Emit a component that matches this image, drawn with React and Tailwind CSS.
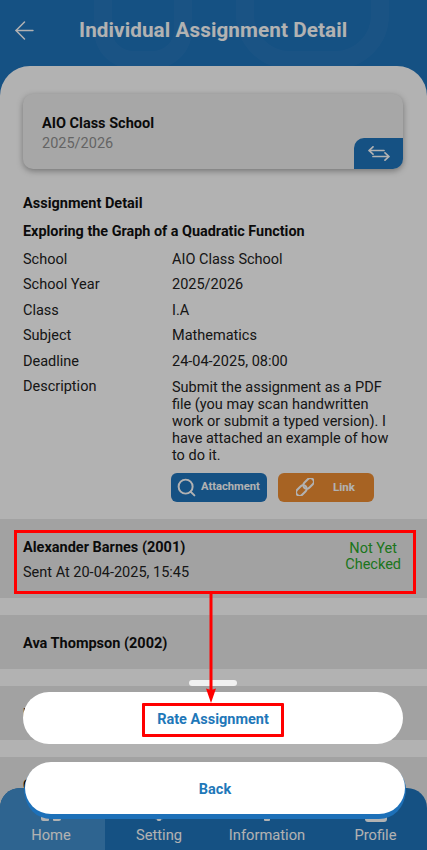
import React from "react";
import { ArrowLeft, Search } from "lucide-react";

const DETAILS = [
  ["School", "AIO Class School"],
  ["School Year", "2025/2026"],
  ["Class", "I.A"],
  ["Subject", "Mathematics"],
  ["Deadline", "24-04-2025, 08:00"],
];

const NAV = [
  { label: "Home", icon: "home", cell: "bg-[#4290ce] pr-[3px]" },
  { label: "Setting", icon: "gear", cell: "" },
  { label: "Information", icon: "bell", cell: "" },
  { label: "Profile", icon: "user", cell: "pl-[3px]" },
];

function NavIcon({ name }) {
  // only the lower edge of these shows below the Back button
  return (
    <svg width="24" height="24" viewBox="0 0 24 24" fill="#fff">
      {name === "home" && (
        <path d="M12 2 2 11v10a2 2 0 0 0 2 2h5a1 1 0 0 0 1-1v-5h4v5a1 1 0 0 0 1 1h5a2 2 0 0 0 2-2V11z" />
      )}
      {name === "gear" && (
        <path d="M3 14h18l-1 3-3 1-1 3-2 .5-.5 1.500h-3L10 21.500 8 21l-1-3-3-1z" />
      )}
      {name === "bell" && (
        <>
          <path d="M1 14h22c0 3-2 4-5 4H6c-3 0-5-1-5-4z" />
          <rect x="9" y="20" width="6" height="3" rx="1" />
        </>
      )}
      {name === "user" && (
        <path d="M1 12h22v9a3 3 0 0 1-3 3H4a3 3 0 0 1-3-3z" />
      )}
    </svg>
  );
}

function SwitchIcon() {
  return (
    <svg width="22" height="15" viewBox="0 0 22 15" fill="none" stroke="#fff" strokeWidth="1.700" strokeLinecap="round" strokeLinejoin="round">
      <path d="M16 4.500H1M5 .8 1 4.500l4 3.700" />
      <path d="M5 10.500h16M17 6.800l4 3.700-4 3.700" />
    </svg>
  );
}

function ChainIcon() {
  return (
    <svg width="18" height="18" viewBox="0 0 18 18" fill="none" stroke="#fff" strokeWidth="2">
      <g transform="rotate(-45 9 9)">
        <rect x="-2" y="5.500" width="12" height="7" rx="3.500" />
        <rect x="8" y="5.500" width="12" height="7" rx="3.500" />
      </g>
    </svg>
  );
}

function StudentRow({ name, sent, className }) {
  return (
    <div className={`flex items-center justify-between bg-[#e9e9e9] pl-[23px] pr-[26px] ${className}`}>
      <div>
        <div className="text-[14.5px] font-bold leading-[18px] text-[#111]">{name}</div>
        {sent && <div className="mt-[7px] text-[14.5px] leading-[18px] text-[#222]">{sent}</div>}
      </div>
      {sent && (
        <div className="mb-[8px] text-center text-[14.5px] leading-[16px] text-[#2aa82a]">
          Not Yet
          <br />
          Checked
        </div>
      )}
    </div>
  );
}

export default function App() {
  return (
    <div className="relative h-[850px] w-[427px] overflow-hidden bg-[#1f74bc] font-['Roboto',sans-serif]">
      {/* faint pattern behind the header */}
      <svg className="absolute left-0 top-0" width="427" height="66" fill="none" stroke="#fff" strokeOpacity="0.035" strokeWidth="18">
        <rect x="103" y="-40" width="80" height="100" rx="30" />
        <rect x="245" y="-50" width="135" height="110" rx="45" />
      </svg>

      <div className="relative flex h-[66px] items-center pb-[6px]">
        <ArrowLeft className="ml-[10px] text-white" size={29} strokeWidth={1.25} />
        <h1 className="ml-[40px] text-[20.650px] font-bold tracking-[0.1px] text-white">Individual Assignment Detail</h1>
      </div>

      <div className="relative h-[784px] rounded-t-[30px] bg-white pt-[28px]">
        <div className="relative ml-[23px] flex h-[75px] w-[380px] flex-col justify-center overflow-hidden rounded-[10px] bg-[#f0f0f0] pl-[19px] pt-[4px] shadow-[0_2px_6px_rgba(0,0,0,0.35)]">
          <div className="text-[14.5px] font-bold leading-[20px] text-[#111]">AIO Class School</div>
          <div className="text-[14.5px] leading-[20px] text-[#909090]">2025/2026</div>
          <div className="absolute bottom-0 right-0 flex h-[31px] w-[49px] items-center justify-center rounded-tl-[10px] bg-[#1f74bc]">
            <SwitchIcon />
          </div>
        </div>

        <div className="mx-[23px] mt-[25px] text-[14.5px] text-[#222]">
          <div className="font-bold leading-[20px] text-[#111]">Assignment Detail</div>
          <div className="mt-[8px] text-[14.4px] font-bold leading-[20px] text-[#111]">Exploring the Graph of a Quadratic Function</div>
          <div className="mt-[8px] flex flex-col gap-[5.400px]">
            {DETAILS.map(([label, value]) => (
              <div key={label} className="grid grid-cols-[149px_1fr] leading-[20px]">
                <span>{label}</span>
                <span>{value}</span>
              </div>
            ))}
            <div className="grid grid-cols-[149px_1fr]">
              <span className="leading-[20px]">Description</span>
              <span className="pr-[10px] pt-[2px] leading-[17px]">
                Submit the assignment as a PDF file (you may scan handwritten work or submit a typed version). I have attached an example of how to do it.
              </span>
            </div>
          </div>
          <div className="ml-[148px] mt-[9px] flex gap-[11px]">
            <div className="flex h-[29px] w-[96px] items-center rounded-[6px] bg-[#1f74bc] pl-[5px] text-[11.2px] font-bold text-white">
              <Search size={21} strokeWidth={2.25} />
              <span className="ml-[4px]">Attachment</span>
            </div>
            <div className="flex h-[29px] w-[96px] items-center rounded-[6px] bg-[#f08e33] pl-[18px] text-[11.5px] font-bold text-white">
              <ChainIcon />
              <span className="ml-[19px]">Link</span>
            </div>
          </div>
        </div>

        <div className="mt-[17px] flex flex-col gap-[17px]">
          <StudentRow className="h-[79px] pt-[5px]" name="Alexander Barnes (2001)" sent="Sent At 20-04-2025, 15:45" />
          <StudentRow className="h-[54px] pt-[4px]" name="Ava Thompson (2002)" />
          <StudentRow className="h-[54px] pt-[4px]" name="Ben Carter (2003)" />
          <StudentRow className="h-[54px] pt-[4px]" name="Charlotte Davis (2004)" />
        </div>
      </div>

      <nav className="absolute bottom-0 left-0 right-0 grid h-[62px] grid-cols-[105px_108px_108px_106px] overflow-hidden rounded-t-[20px] bg-[#1f74bc] text-[14.7px] text-white">
        {NAV.map((item) => (
          <div key={item.label} className={`flex flex-col items-center pt-[10px] ${item.cell}`}>
            <NavIcon name={item.icon} />
            <span className="mt-[3px] leading-[20px]">{item.label}</span>
          </div>
        ))}
      </nav>

      {/* dim layer and bottom sheet */}
      <div className="absolute inset-0 bg-black/30" />
      <div className="absolute left-[189px] top-[680px] h-[6px] w-[48px] rounded-full bg-[#f0f0f0]" />
      <div className="absolute left-[23px] top-[692px] flex h-[52px] w-[380px] items-center justify-center rounded-full bg-white pt-[3px] text-[14.5px] font-bold text-[#1f78b9]">
        Rate Assignment
      </div>
      <div className="absolute left-[25px] top-[762px] flex h-[52px] w-[380px] items-center justify-center rounded-full bg-white pt-[3px] text-[14.5px] font-bold text-[#1f78b9] shadow-[0_5px_0_#1d70b8,1px_2px_0_#1d70b8,-1px_2px_0_#1d70b8]">
        Back
      </div>

      {/* red annotations */}
      <div className="absolute left-[14px] top-[530px] h-[64px] w-[402px] border-[3px] border-[#ff0000]" />
      <div className="absolute left-[142px] top-[703px] h-[34px] w-[142px] rounded-[1px] border-[3px] border-[#ff0000]" />
      <svg className="absolute left-[200px] top-[593px]" width="22" height="111" fill="#ff0000">
        <rect x="9.500" y="0" width="3" height="100" />
        <path d="M6 95.500 11 97l5-1.500L11 110z" />
      </svg>
    </div>
  );
}
